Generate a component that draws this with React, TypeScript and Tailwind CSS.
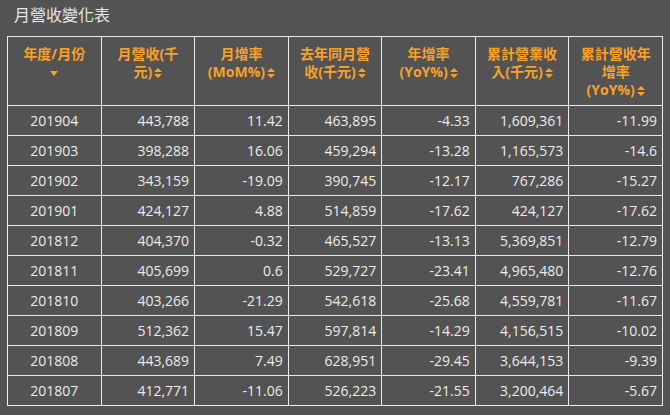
import React from "react";

const headers: string[][] = [
  ["年度/月份"],
  ["月營收(千", "元)"],
  ["月增率", "(MoM%)"],
  ["去年同月營", "收(千元)"],
  ["年增率", "(YoY%)"],
  ["累計營業收", "入(千元)"],
  ["累計營收年", "增率", "(YoY%)"],
];

const rows: string[][] = [
  ["201904", "443,788", "11.42", "463,895", "-4.33", "1,609,361", "-11.99"],
  ["201903", "398,288", "16.06", "459,294", "-13.28", "1,165,573", "-14.6"],
  ["201902", "343,159", "-19.09", "390,745", "-12.17", "767,286", "-15.27"],
  ["201901", "424,127", "4.88", "514,859", "-17.62", "424,127", "-17.62"],
  ["201812", "404,370", "-0.32", "465,527", "-13.13", "5,369,851", "-12.79"],
  ["201811", "405,699", "0.6", "529,727", "-23.41", "4,965,480", "-12.76"],
  ["201810", "403,266", "-21.29", "542,618", "-25.68", "4,559,781", "-11.67"],
  ["201809", "512,362", "15.47", "597,814", "-14.29", "4,156,515", "-10.02"],
  ["201808", "443,689", "7.49", "628,951", "-29.45", "3,644,153", "-9.39"],
  ["201807", "412,771", "-11.06", "526,223", "-21.55", "3,200,464", "-5.67"],
];

const SortIcon = () => (
  <svg
    width="8"
    height="10"
    viewBox="0 0 8 10"
    className="inline-block ml-[2px] align-[-1px]"
  >
    <path d="M4 0 L8 4 L0 4 Z" fill="#f7a128" />
    <path d="M0 6 L8 6 L4 10 Z" fill="#f7a128" />
  </svg>
);

const DescIcon = () => (
  <svg width="8" height="5" viewBox="0 0 8 5" className="inline-block">
    <path d="M0 0 L8 0 L4 5 Z" fill="#f7a128" />
  </svg>
);

export default function App() {
  return (
    <div
      className="w-[670px] h-[415px] bg-[#535353] overflow-hidden"
      style={{ fontFamily: '"Open Sans", "Noto Sans CJK TC", sans-serif' }}
    >
      <div className="pl-[14px] pt-[4px] h-[36px] text-[16px] leading-[22px] text-[#e6e6e6]">
        月營收變化表
      </div>
      <table className="ml-[7px] w-[656px] table-fixed border-collapse">
        <thead>
          <tr>
            {headers.map((h, i) => (
              <th
                key={i}
                className="border border-[#ececec] align-top text-center font-bold text-[14px] leading-[18px] text-[#f7a128] pt-[8px] pb-[6px] h-[68px] px-1"
              >
                {h.map((line, j) => (
                  <div key={j}>
                    {line}
                    {i > 0 && j === h.length - 1 && <SortIcon />}
                  </div>
                ))}
                {i === 0 && (
                  <div className="leading-[18px]">
                    <DescIcon />
                  </div>
                )}
              </th>
            ))}
          </tr>
        </thead>
        <tbody>
          {rows.map((r, i) => (
            <tr key={i} className="h-[30px]">
              {r.map((c, j) => (
                <td
                  key={j}
                  className={`border border-[#ececec] text-[14px] leading-[18px] text-[#ececec] ${
                    j === 0 ? "text-center" : "text-right pr-[5px]"
                  }`}
                >
                  {c}
                </td>
              ))}
            </tr>
          ))}
        </tbody>
      </table>
    </div>
  );
}
